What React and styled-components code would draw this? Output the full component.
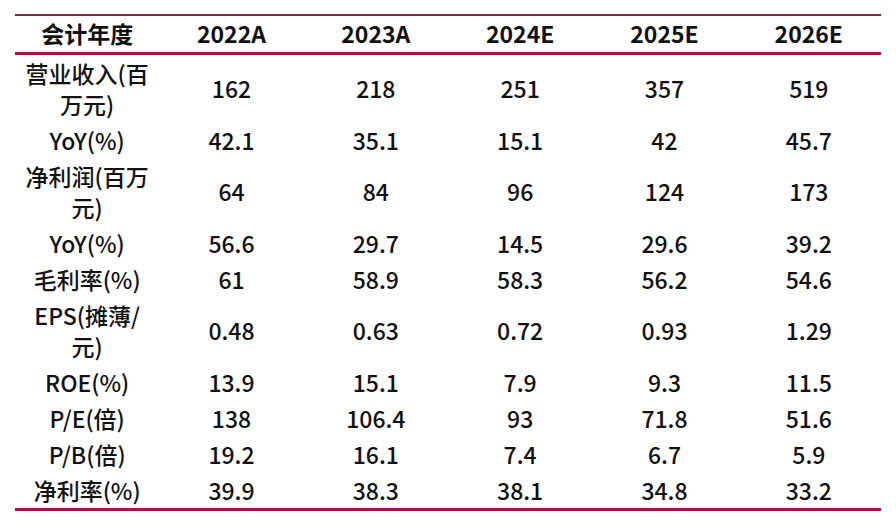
import React from "react";
import styled, { createGlobalStyle } from "styled-components";

const GlobalStyle = createGlobalStyle`
  html, body {
    margin: 0;
    padding: 0;
    background: #ffffff;
  }
  body {
    font-family: "Noto Sans CJK SC", "Noto Sans", sans-serif;
    color: #111111;
  }
`;

const Page = styled.div`
  width: 896px;
  height: 526px;
  padding: 14px 0 0 15px;
  box-sizing: border-box;
  background: #fff;
`;

const Table = styled.table`
  width: 866px;
  border-collapse: collapse;
  table-layout: fixed;
  border-top: 2px solid #7c2947;
  border-bottom: 3px solid #9b1a42;
  font-size: 23px;
`;

const HeadRow = styled.tr`
  border-bottom: 3px solid #9b1a42;
`;

const HeadCell = styled.th`
  height: 34px;
  padding: 0 0 2px;
  font-weight: 700;
  line-height: 30px;
  text-align: center;
`;

const Cell = styled.td`
  padding: 2.5px 8px;
  line-height: 31px;
  font-weight: 500;
  text-align: center;
  vertical-align: middle;
  word-break: normal;
`;

const years = ["2022A", "2023A", "2024E", "2025E", "2026E"];

const rows = [
  ["营业收入(百万元)", "162", "218", "251", "357", "519"],
  ["YoY(%)", "42.1", "35.1", "15.1", "42", "45.7"],
  ["净利润(百万元)", "64", "84", "96", "124", "173"],
  ["YoY(%)", "56.6", "29.7", "14.5", "29.6", "39.2"],
  ["毛利率(%)", "61", "58.9", "58.3", "56.2", "54.6"],
  ["EPS(摊薄/元)", "0.48", "0.63", "0.72", "0.93", "1.29"],
  ["ROE(%)", "13.9", "15.1", "7.9", "9.3", "11.5"],
  ["P/E(倍)", "138", "106.4", "93", "71.8", "51.6"],
  ["P/B(倍)", "19.2", "16.1", "7.4", "6.7", "5.9"],
  ["净利率(%)", "39.9", "38.3", "38.1", "34.8", "33.2"],
];

export default function App() {
  return (
    <>
      <GlobalStyle />
      <Page>
        <Table>
          <thead>
            <HeadRow>
              <HeadCell>会计年度</HeadCell>
              {years.map((y) => (
                <HeadCell key={y}>{y}</HeadCell>
              ))}
            </HeadRow>
          </thead>
          <tbody>
            {rows.map((r, i) => (
              <tr key={i}>
                {r.map((v, j) => (
                  <Cell key={j}>{v}</Cell>
                ))}
              </tr>
            ))}
          </tbody>
        </Table>
      </Page>
    </>
  );
}
